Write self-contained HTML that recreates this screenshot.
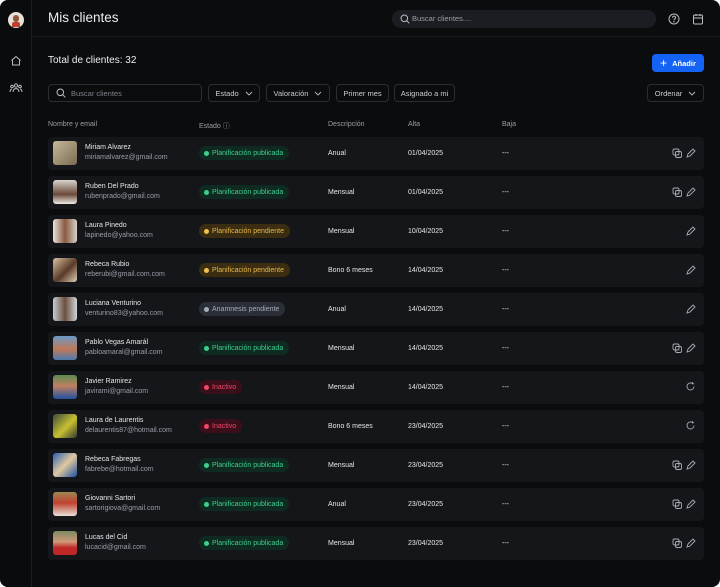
<!DOCTYPE html>
<html><head><meta charset="utf-8"><style>
*{margin:0;padding:0;box-sizing:border-box}
html,body{width:720px;height:587px;background:#fff;overflow:hidden}
body{font-family:"Liberation Sans","DejaVu Sans",sans-serif;color:#e6e7ea}
.app{position:absolute;left:0;top:0;width:720px;height:587px;background:#0b0c0e;border-radius:8px;overflow:hidden}
.side{position:absolute;left:0;top:0;width:32px;height:587px;background:#0a0b0d;border-right:1px solid #1c1e22}
.hdr{position:absolute;left:32px;top:0;right:0;height:37px;border-bottom:1px solid #1a1c20}
.abs{position:absolute}
.btn{position:absolute;top:84px;height:18px;border:1px solid #2a2d33;border-radius:4px;font-size:7.5px;color:#c9ccd1;display:flex;align-items:center;justify-content:center;gap:6px}
.th{position:absolute;top:121px;font-size:7px;color:#9a9ea6}
.row{position:absolute;left:48px;width:656px;height:33px;background:#14161a;border-radius:4px}
.av{position:absolute;left:5px;top:4px;width:24px;height:24px;border-radius:3px}
.nm{position:absolute;left:37px;top:7px;font-size:7px;color:#e6e7ea}
.em{position:absolute;left:37px;top:17px;font-size:7px;color:#9a9ea6}
.bd{position:absolute;left:151px;top:9px;height:14px;border-radius:7px;font-size:7px;padding:0 6px 0 5px;display:flex;align-items:center;gap:3px}
.bd i{width:5px;height:5px;border-radius:50%;display:inline-block}
.g{background:#0f2a21;color:#3fcf8e}.g i{background:#3fcf8e}
.y{background:#3a2d12;color:#e8b84a}.y i{background:#f0c14b}
.s{background:#2a2f37;color:#a7adb6}.s i{background:#a7adb6}
.r{background:#3a0f1a;color:#f0476a}.r i{background:#f0476a}
.c{position:absolute;top:0;height:33px;line-height:33px;font-size:7px;color:#e6e7ea}
.ic{position:absolute;top:10px}
</style></head><body><div class="app">
<div class="side">
<div class="abs" style="left:8px;top:12px;width:16px;height:16px;border-radius:50%;background:#e8e0d8"><div style="position:absolute;left:5px;top:3px;width:6px;height:7px;border-radius:3px;background:#8a5a3a"></div><div style="position:absolute;left:4px;top:10px;width:8px;height:5px;background:#c04030;border-radius:2px 2px 0 0"></div></div>
<svg class="abs" style="left:10px;top:55px" width="12" height="11" viewBox="0 0 12 11" fill="none" stroke="#b8bcc3" stroke-width="1"><path d="M1.5 5.5L6 1.5l4.5 4M2.5 4.8V10h7V4.8"/></svg>
<svg class="abs" style="left:9px;top:83px" width="14" height="10" viewBox="0 0 14 10" fill="none" stroke="#b8bcc3" stroke-width="1"><circle cx="7" cy="2.5" r="1.6"/><circle cx="3" cy="3.5" r="1.3"/><circle cx="11" cy="3.5" r="1.3"/><path d="M4 9c0-2 1.3-3.5 3-3.5S10 7 10 9M1 9c0-1.5.8-3 2-3M13 9c0-1.5-.8-3-2-3"/></svg>
</div>
<div class="hdr">
<div class="abs" style="left:16px;top:10px;font-size:13.5px;color:#eceef1">Mis clientes</div>
<div class="abs" style="left:360px;top:10px;width:264px;height:18px;background:#1a1d22;border-radius:9px;font-size:7.5px;color:#9a9ea6;padding-left:20px;line-height:18px">Buscar clientes....</div>
<svg class="abs" style="left:368px;top:14px" width="10" height="10" viewBox="0 0 10 10" fill="none" stroke="#b8bcc3" stroke-width="1"><circle cx="4.3" cy="4.3" r="3.3"/><path d="M6.8 6.8L9.3 9.3"/></svg>
<svg class="abs" style="left:636px;top:13px" width="12" height="12" viewBox="0 0 12 12" fill="none" stroke="#b8bcc3" stroke-width="1"><circle cx="6" cy="6" r="5"/><path d="M4.5 4.7a1.5 1.5 0 1 1 2 1.4c-.4.2-.5.5-.5.9"/><circle cx="6" cy="8.6" r=".3"/></svg>
<svg class="abs" style="left:660px;top:13px" width="12" height="12" viewBox="0 0 12 12" fill="none" stroke="#b8bcc3" stroke-width="1"><rect x="1.5" y="2" width="9" height="9" rx="1.2"/><path d="M1.5 5h9M4 1v2M8 1v2"/></svg>
</div>
<div class="abs" style="left:48px;top:55px;font-size:10px;color:#eceef1">Total de clientes: 32</div>
<div class="abs" style="left:652px;top:54px;width:52px;height:18px;background:#1463f5;border-radius:4px;font-size:7.5px;color:#fff;display:flex;align-items:center;justify-content:center;gap:5px;font-weight:bold"><span style="font-size:12px;font-weight:normal;line-height:1">+</span>Añadir</div>
<div class="btn" style="left:48px;width:154px;justify-content:flex-start;padding-left:22px;color:#7e838b">Buscar clientes</div>
<svg class="abs" style="left:56px;top:88px" width="10" height="10" viewBox="0 0 10 10" fill="none" stroke="#b8bcc3" stroke-width="1"><circle cx="4.3" cy="4.3" r="3.3"/><path d="M6.8 6.8L9.3 9.3"/></svg>
<div class="btn" style="left:208px;width:52px">Estado <svg width="8" height="5" viewBox="0 0 8 5" fill="none" stroke="#b8bcc3" stroke-width="0.9"><path d="M1 1l3 3 3-3"/></svg></div>
<div class="btn" style="left:266px;width:64px">Valoración <svg width="8" height="5" viewBox="0 0 8 5" fill="none" stroke="#b8bcc3" stroke-width="0.9"><path d="M1 1l3 3 3-3"/></svg></div>
<div class="btn" style="left:336px;width:53px">Primer mes</div>
<div class="btn" style="left:394px;width:61px">Asignado a mi</div>
<div class="btn" style="left:647px;width:57px">Ordenar <svg width="8" height="5" viewBox="0 0 8 5" fill="none" stroke="#b8bcc3" stroke-width="0.9"><path d="M1 1l3 3 3-3"/></svg></div>
<div class="th" style="left:48px">Nombre y email</div>
<div class="th" style="left:199px">Estado ⓘ</div>
<div class="th" style="left:328px">Descripción</div>
<div class="th" style="left:408px">Alta</div>
<div class="th" style="left:502px">Baja</div>

<div class="row" style="top:137px"><div class="av" style="background:linear-gradient(135deg,#c8b89a,#7a6a50)"></div><div class="nm">Miriam Alvarez</div><div class="em">miriamalvarez@gmail.com</div><div class="bd g"><i></i>Planificación publicada</div><div class="c" style="left:280px">Anual</div><div class="c" style="left:360px">01/04/2025</div><div class="c" style="left:454px">---</div><svg class="ic" style="left:624px" width="24" height="12" viewBox="0 0 24 12" fill="none" stroke="#a7adb6" stroke-width="0.9"><rect x="1" y="2" width="6" height="6" rx="1.5"/><rect x="3.5" y="4.5" width="6" height="6" rx="1.5"/><path d="M15 10l1-3 5-5 2 2-5 5z"/></svg></div>
<div class="row" style="top:176px"><div class="av" style="background:linear-gradient(180deg,#d8d4cc,#6a4a3a 60%,#f0ece8)"></div><div class="nm">Ruben Del Prado</div><div class="em">rubenprado@gmail.com</div><div class="bd g"><i></i>Planificación publicada</div><div class="c" style="left:280px">Mensual</div><div class="c" style="left:360px">01/04/2025</div><div class="c" style="left:454px">---</div><svg class="ic" style="left:624px" width="24" height="12" viewBox="0 0 24 12" fill="none" stroke="#a7adb6" stroke-width="0.9"><rect x="1" y="2" width="6" height="6" rx="1.5"/><rect x="3.5" y="4.5" width="6" height="6" rx="1.5"/><path d="M15 10l1-3 5-5 2 2-5 5z"/></svg></div>
<div class="row" style="top:215px"><div class="av" style="background:linear-gradient(90deg,#e8e4e0,#8a5a40 50%,#d8d0c8)"></div><div class="nm">Laura Pinedo</div><div class="em">lapinedo@yahoo.com</div><div class="bd y"><i></i>Planificación pendiente</div><div class="c" style="left:280px">Mensual</div><div class="c" style="left:360px">10/04/2025</div><div class="c" style="left:454px">---</div><svg class="ic" style="left:636px" width="12" height="12" viewBox="0 0 12 12" fill="none" stroke="#a7adb6" stroke-width="0.9"><path d="M3 10l1-3 5-5 2 2-5 5z"/></svg></div>
<div class="row" style="top:254px"><div class="av" style="background:linear-gradient(135deg,#d8c0a0,#5a3a28 55%,#e0d0b8)"></div><div class="nm">Rebeca Rubio</div><div class="em">reberubi@gmail.com.com</div><div class="bd y"><i></i>Planificación pendiente</div><div class="c" style="left:280px">Bono 6 meses</div><div class="c" style="left:360px">14/04/2025</div><div class="c" style="left:454px">---</div><svg class="ic" style="left:636px" width="12" height="12" viewBox="0 0 12 12" fill="none" stroke="#a7adb6" stroke-width="0.9"><path d="M3 10l1-3 5-5 2 2-5 5z"/></svg></div>
<div class="row" style="top:293px"><div class="av" style="background:linear-gradient(90deg,#c8ccd0,#6a5040 50%,#d0d4d8)"></div><div class="nm">Luciana Venturino</div><div class="em">venturino83@yahoo.com</div><div class="bd s"><i></i>Anamnesis pendiente</div><div class="c" style="left:280px">Anual</div><div class="c" style="left:360px">14/04/2025</div><div class="c" style="left:454px">---</div><svg class="ic" style="left:636px" width="12" height="12" viewBox="0 0 12 12" fill="none" stroke="#a7adb6" stroke-width="0.9"><path d="M3 10l1-3 5-5 2 2-5 5z"/></svg></div>
<div class="row" style="top:332px"><div class="av" style="background:linear-gradient(180deg,#6a9ac8,#c07858 55%,#4a7ab0)"></div><div class="nm">Pablo Vegas Amarál</div><div class="em">pabloamaral@gmail.com</div><div class="bd g"><i></i>Planificación publicada</div><div class="c" style="left:280px">Mensual</div><div class="c" style="left:360px">14/04/2025</div><div class="c" style="left:454px">---</div><svg class="ic" style="left:624px" width="24" height="12" viewBox="0 0 24 12" fill="none" stroke="#a7adb6" stroke-width="0.9"><rect x="1" y="2" width="6" height="6" rx="1.5"/><rect x="3.5" y="4.5" width="6" height="6" rx="1.5"/><path d="M15 10l1-3 5-5 2 2-5 5z"/></svg></div>
<div class="row" style="top:371px"><div class="av" style="background:linear-gradient(180deg,#5a8a50,#c08060 45%,#2050a0)"></div><div class="nm">Javier Ramirez</div><div class="em">javirami@gmail.com</div><div class="bd r"><i></i>Inactivo</div><div class="c" style="left:280px">Mensual</div><div class="c" style="left:360px">14/04/2025</div><div class="c" style="left:454px">---</div><svg class="ic" style="left:637px" width="11" height="11" viewBox="0 0 11 11" fill="none" stroke="#a7adb6" stroke-width="0.9"><path d="M9 5.5A3.5 3.5 0 1 1 7.5 2.6M7.5 1v1.8H9.2"/></svg></div>
<div class="row" style="top:410px"><div class="av" style="background:linear-gradient(135deg,#3a4a3a,#c8c030 55%,#303830)"></div><div class="nm">Laura de Laurentis</div><div class="em">delaurentis87@hotmail.com</div><div class="bd r"><i></i>Inactivo</div><div class="c" style="left:280px">Bono 6 meses</div><div class="c" style="left:360px">23/04/2025</div><div class="c" style="left:454px">---</div><svg class="ic" style="left:637px" width="11" height="11" viewBox="0 0 11 11" fill="none" stroke="#a7adb6" stroke-width="0.9"><path d="M9 5.5A3.5 3.5 0 1 1 7.5 2.6M7.5 1v1.8H9.2"/></svg></div>
<div class="row" style="top:449px"><div class="av" style="background:linear-gradient(135deg,#2a60b0,#e0c8a0 50%,#1a50a0)"></div><div class="nm">Rebeca Fabregas</div><div class="em">fabrebe@hotmail.com</div><div class="bd g"><i></i>Planificación publicada</div><div class="c" style="left:280px">Mensual</div><div class="c" style="left:360px">23/04/2025</div><div class="c" style="left:454px">---</div><svg class="ic" style="left:624px" width="24" height="12" viewBox="0 0 24 12" fill="none" stroke="#a7adb6" stroke-width="0.9"><rect x="1" y="2" width="6" height="6" rx="1.5"/><rect x="3.5" y="4.5" width="6" height="6" rx="1.5"/><path d="M15 10l1-3 5-5 2 2-5 5z"/></svg></div>
<div class="row" style="top:488px"><div class="av" style="background:linear-gradient(180deg,#a08850,#c04030 45%,#e8e0d8)"></div><div class="nm">Giovanni Sartori</div><div class="em">sartorigiova@gmail.com</div><div class="bd g"><i></i>Planificación publicada</div><div class="c" style="left:280px">Anual</div><div class="c" style="left:360px">23/04/2025</div><div class="c" style="left:454px">---</div><svg class="ic" style="left:624px" width="24" height="12" viewBox="0 0 24 12" fill="none" stroke="#a7adb6" stroke-width="0.9"><rect x="1" y="2" width="6" height="6" rx="1.5"/><rect x="3.5" y="4.5" width="6" height="6" rx="1.5"/><path d="M15 10l1-3 5-5 2 2-5 5z"/></svg></div>
<div class="row" style="top:527px"><div class="av" style="background:linear-gradient(180deg,#7a8a60,#d09878 45%,#c02828 70%)"></div><div class="nm">Lucas del Cid</div><div class="em">lucacid@gmail.com</div><div class="bd g"><i></i>Planificación publicada</div><div class="c" style="left:280px">Mensual</div><div class="c" style="left:360px">23/04/2025</div><div class="c" style="left:454px">---</div><svg class="ic" style="left:624px" width="24" height="12" viewBox="0 0 24 12" fill="none" stroke="#a7adb6" stroke-width="0.9"><rect x="1" y="2" width="6" height="6" rx="1.5"/><rect x="3.5" y="4.5" width="6" height="6" rx="1.5"/><path d="M15 10l1-3 5-5 2 2-5 5z"/></svg></div>
</div></body></html>
